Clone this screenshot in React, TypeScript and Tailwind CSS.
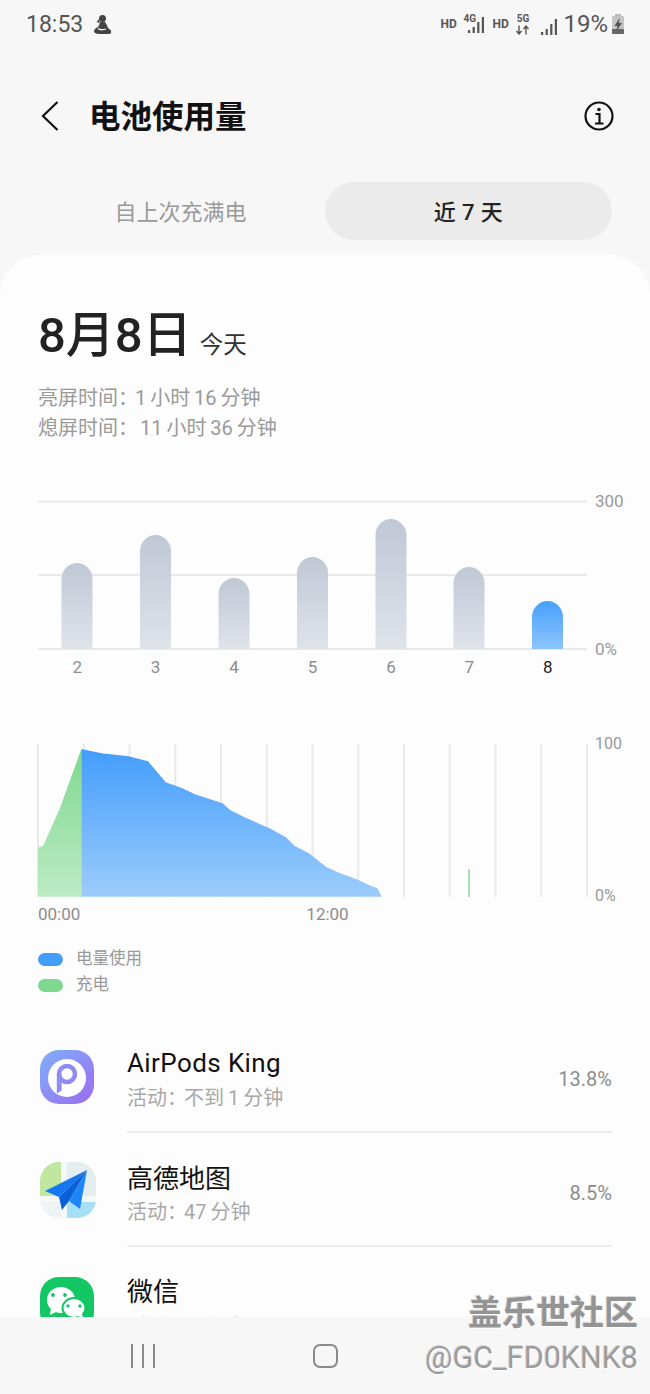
import React from 'react';

const CJK = '[font-family:Roboto,"Noto_Sans_CJK_SC",sans-serif]';

const bars = [
  { day: 2, x: 61.5, top: 563 },
  { day: 3, x: 140, top: 535 },
  { day: 4, x: 218.5, top: 578 },
  { day: 5, x: 297, top: 557 },
  { day: 6, x: 375.5, top: 519 },
  { day: 7, x: 453.5, top: 567 },
  { day: 8, x: 532, top: 601 },
];

const usagePoints =
  '43.3,896.7 43.3,749 63.6,753.3 90.5,756.3 110,761.3 127.8,782.3 144.4,788.3 156.9,794.3 184.6,803.3 192,810 206.6,817.3 231.5,828.3 248,837.3 256.4,845.7 270.9,853.3 288.3,867 302,873.3 318.6,879.3 331,885 339.3,888.3 343.8,896.7';

const Signal = () => (
  <svg width="17" height="16" viewBox="0 0 17 16" className="shrink-0">
    <rect x="0" y="13" width="2.2" height="3" fill="#555" />
    <rect x="4.6" y="10" width="2.2" height="6" fill="#555" />
    <rect x="9.2" y="5" width="2.2" height="11" fill="#555" />
    <rect x="13.8" y="0" width="2.2" height="16" fill="#555" />
  </svg>
);

const StatusIcons = () => (
  <div className="flex items-center text-[#555] [font-family:Roboto,sans-serif]">
    <span className="text-[12px] font-bold leading-none w-[16px]">HD</span>
    <div className="relative w-[22px] h-[20px] ml-[7px]">
      <span className="absolute left-0 top-0 text-[10px] font-bold leading-[9px]">4G</span>
      <div className="absolute left-[5px] top-[3px]">
        <Signal />
      </div>
    </div>
    <span className="text-[12px] font-bold leading-none w-[16px] ml-[7px]">HD</span>
    <div className="flex flex-col items-center w-[15px] ml-[7px]">
      <span className="text-[10px] font-bold leading-[9px]">5G</span>
      <svg width="15" height="10" viewBox="0 0 15 10" fill="none" stroke="#555" strokeWidth="1.4" className="mt-[2px]">
        <path d="M4 0.5v8M1.5 6L4 9l2.5-3M11 9.5v-8M8.5 4L11 1l2.5 3" />
      </svg>
    </div>
    <div className="ml-[11px] mt-[5px]">
      <Signal />
    </div>
    <span className="text-[24px] leading-none ml-[5px] font-normal">19%</span>
    <svg width="14" height="21" viewBox="0 0 14 21" className="ml-[3px]">
      <rect x="4" y="0" width="6" height="2" fill="#bbb" />
      <rect x="1" y="2" width="12" height="18" rx="1.5" fill="#c4c4c4" />
      <rect x="1" y="15" width="12" height="5" rx="1" fill="#666" />
      <path d="M8.5 4L3.5 12h3l-1 5 5.5-8h-3z" fill="#555" />
    </svg>
  </div>
);

const AirPodsIcon = () => (
  <svg width="54" height="54" viewBox="0 0 54 54">
    <defs>
      <linearGradient id="apk" x1="0" y1="0" x2="1" y2="1">
        <stop offset="0" stopColor="#7fb0fa" />
        <stop offset="1" stopColor="#9b6cf1" />
      </linearGradient>
    </defs>
    <rect width="54" height="54" rx="19" fill="url(#apk)" />
    <circle cx="27" cy="28" r="19" fill="#fff" />
    <circle cx="27" cy="24" r="8" fill="none" stroke="#8f8bf3" strokeWidth="4.5" />
    <path d="M16.8 24v19.5l4.8-3V24z" fill="#8f8bf3" />
  </svg>
);

const AmapIcon = () => (
  <svg width="56" height="56" viewBox="0 0 56 56" className="-mt-[2px]">
    <defs>
      <clipPath id="amapClip">
        <rect width="56" height="56" rx="19" />
      </clipPath>
    </defs>
    <g clipPath="url(#amapClip)">
      <rect width="56" height="56" fill="#f4f8f9" />
      <rect width="21" height="34" fill="#bfe79f" />
      <rect x="27" width="29" height="34" fill="#e4eeef" />
      <rect x="27" y="40" width="29" height="16" fill="#a6e0f6" />
      <rect y="40" width="21" height="16" fill="#eef4f6" />
    </g>
    <path d="M47 8L5 29l14 6z" fill="#1677f2" />
    <path d="M47 8L19 35l3 13 7-9z" fill="#0b5fd6" />
    <path d="M47 8L29 39l11 8z" fill="#1c86f7" />
  </svg>
);

const WechatIcon = () => (
  <svg width="54" height="54" viewBox="0 0 54 54" className="-mt-[1px]">
    <rect width="54" height="54" rx="19" fill="#12c764" />
    <ellipse cx="21" cy="23" rx="14" ry="13" fill="#fff" />
    <path d="M11 31l-1 7 8-4z" fill="#fff" />
    <ellipse cx="34" cy="31" rx="11.5" ry="10" fill="#fff" stroke="#12c764" strokeWidth="2" />
    <path d="M38 39l5 3-1-6z" fill="#fff" />
    <circle cx="13" cy="18" r="1.9" fill="#12c764" />
    <circle cx="25" cy="18" r="1.9" fill="#12c764" />
    <circle cx="28" cy="29" r="1.7" fill="#12c764" />
    <circle cx="40" cy="29" r="1.7" fill="#12c764" />
  </svg>
);

const apps = [
  { name: 'AirPods King', nameClass: 'leading-[32px] tracking-[0.4px]', subClass: 'mt-[5px]', sub: '不到 1 分钟', pct: '13.8%', icon: <AirPodsIcon /> },
  { name: '高德地图', nameClass: 'leading-[36px]', subClass: 'mt-[1px]', sub: '47 分钟', pct: '8.5%', icon: <AmapIcon /> },
  { name: '微信', nameClass: 'leading-[32px]', subClass: 'mt-[5px]', sub: '1 小时', pct: '', icon: <WechatIcon /> },
];

export default function App() {
  return (
    <div className={`relative w-[650px] h-[1394px] overflow-hidden bg-[#f7f7f7] flex flex-col ${CJK}`}>
      {/* status bar */}
      <div className="h-[48px] shrink-0 flex items-center justify-between pl-[26px] pr-[25px]">
        <div className="flex items-center text-[#555]">
          <span className="text-[23px] leading-none font-normal">18:53</span>
          <svg width="20" height="21" viewBox="0 0 20 21" className="ml-[10px]" fill="#444">
            <circle cx="9.5" cy="4.5" r="3.5" />
            <path d="M6.5 4.5L3.5 8l3 1z" />
            <path d="M7 8h5c1.5 2 2.5 4 3 6l2.5 2c1.500 1.500.5 4-1.500 4H6c-3 0-5-1-5-3s2-3 4-4c1-1 1.500-3 2-5z" />
            <path d="M5 14.500c2 1.500 5 1.500 8 .5" fill="none" stroke="#f7f7f7" strokeWidth="1.3" />
          </svg>
        </div>
        <StatusIcons />
      </div>

      {/* title row */}
      <div className="h-[68px] mt-[34px] shrink-0 flex items-center pl-[41px] pr-[36px]">
        <svg width="18" height="30" viewBox="0 0 18 30" fill="none" stroke="#111" strokeWidth="2.2">
          <path d="M16.500 1L2 15l14.500 14" />
        </svg>
        <h1 className="ml-[30px] mt-[3px] text-[31.5px] font-bold leading-none text-[#111]">电池使用量</h1>
        <svg width="30" height="30" viewBox="0 0 30 30" fill="none" className="ml-auto">
          <circle cx="15" cy="15" r="13.5" stroke="#111" strokeWidth="2.2" />
          <circle cx="15" cy="8.5" r="1.8" fill="#111" />
          <path d="M11.5 13H15.500V22M11 22.500H19.500" stroke="#111" strokeWidth="2.2" />
        </svg>
      </div>

      {/* tabs */}
      <div className="mt-[32px] shrink-0 flex pl-[38px] pr-[38px] h-[58px]">
        <div className="w-[287px] pt-[2px] flex items-center justify-center text-[22px] text-[#9a9a9a] -ml-[1px]">自上次充满电</div>
        <div className="w-[287px] pt-[2px] flex items-center justify-center text-[22px] font-medium text-[#222] bg-[#ebebeb] rounded-full ml-[1px] tracking-[0.4px]">近 7 天</div>
      </div>

      {/* card */}
      <div className="mt-[15px] flex-1 min-h-0 overflow-hidden bg-[#fdfdfd] rounded-t-[40px] pl-[38px]">
        <div className="flex items-end mt-[52px] h-[58px]">
          <span className="text-[49px] leading-[58px] font-medium text-[#222]">8月8日</span>
          <span className="ml-[8px] text-[23.5px] leading-[40px] text-[#333]">今天</span>
        </div>
        <div className="mt-[18px] text-[20px] leading-[30px] text-[#999] [word-spacing:-1px]">
          <p>亮屏时间<span className="tracking-[-7px]">：</span> 1 小时 16 分钟</p>
          <p>熄屏时间<span className="tracking-[-2px]">：</span> 11 小时 36 分钟</p>
        </div>

        {/* weekly chart */}
        <div className="mt-[57px] flex items-stretch h-[150px]">
          <svg width="549" height="150" viewBox="38 500 549 150" className="shrink-0">
            <defs>
              <linearGradient id="barGrey" x1="0" y1="0" x2="0" y2="1">
                <stop offset="0" stopColor="#c0c8d5" />
                <stop offset="1" stopColor="#dfe3ea" />
              </linearGradient>
              <linearGradient id="barBlue" x1="0" y1="0" x2="0" y2="1">
                <stop offset="0" stopColor="#47a0fb" />
                <stop offset="1" stopColor="#8cc4fb" />
              </linearGradient>
            </defs>
            <path d="M38 501.500H587M38 575H587M38 649H587" stroke="#e9e9e9" strokeWidth="2" />
            {bars.map((b) => (
              <path
                key={b.day}
                d={`M${b.x} 649V${b.top + 16}a15.5 16 0 0 1 31 0V649z`}
                fill={b.day === 8 ? 'url(#barBlue)' : 'url(#barGrey)'}
              />
            ))}
          </svg>
          <div className="ml-[8px] flex flex-col justify-between text-[17px] leading-[20px] text-[#999] -my-[9px]">
            <span>300</span>
            <span>0%</span>
          </div>
        </div>
        <div className="w-[549px] grid grid-cols-7 mt-[7px] text-[17px] leading-[20px] text-center text-[#8c8c8c]">
          {bars.map((b) => (
            <span key={b.day} className={b.day === 8 ? 'text-[#222]' : ''}>
              {b.day}
            </span>
          ))}
        </div>

        {/* daily chart */}
        <div className="mt-[66px] flex items-stretch h-[154px]">
          <svg width="551" height="154" viewBox="0 0 551 154" className="shrink-0 -ml-[1px]">
            <defs>
              <linearGradient id="usageFill" x1="0" y1="0" x2="0" y2="1">
                <stop offset="0" stopColor="#439dfb" />
                <stop offset="1" stopColor="#9cccfb" />
              </linearGradient>
              <linearGradient id="chargeFill" x1="0" y1="0" x2="0" y2="1">
                <stop offset="0" stopColor="#7fd88f" />
                <stop offset="1" stopColor="#bcebc4" />
              </linearGradient>
            </defs>
            <g transform="translate(0 -743)">
              {[...Array(13)].map((_, i) => (
                <path key={i} d={`M${1 + i * 45.75} 744V897`} stroke="#e9e9e9" strokeWidth="2" />
              ))}
              <g transform="translate(1 0)">
                <polygon points="0,896.7 0,847.7 5,846 22,808 43.3,749 43.3,896.7" fill="url(#chargeFill)" />
                <polygon points={usagePoints} fill="url(#usageFill)" />
                <path d="M431 869V897" stroke="#a9e2b4" strokeWidth="2" />
              </g>
            </g>
          </svg>
          <div className="ml-[7px] flex flex-col justify-between text-[16px] leading-[20px] text-[#999] -my-[9px]">
            <span>100</span>
            <span>0%</span>
          </div>
        </div>
        <div className="flex mt-[7px] text-[17px] leading-[20px] text-[#8c8c8c] w-[549px]">
          <span>00:00</span>
          <span className="ml-[226px]">12:00</span>
        </div>

        {/* legend */}
        <div className="mt-[25px] flex flex-col gap-[6px] text-[16.5px] leading-[20px] text-[#999]">
          <div className="flex items-center">
            <span className="w-[25px] h-[13px] rounded-full bg-[#439dfb]" />
            <span className="ml-[13px]">电量使用</span>
          </div>
          <div className="flex items-center">
            <span className="w-[25px] h-[13px] rounded-full bg-[#7fd88f]" />
            <span className="ml-[13px]">充电</span>
          </div>
        </div>

        {/* app list */}
        <div className="mt-[27px]">
          {apps.map((app, i) => (
            <div key={app.name} className="flex items-start h-[114px]">
              <div className="w-[56px] ml-[2px] mt-[28px] shrink-0">{app.icon}</div>
              <div className={`ml-[31px] w-[485px] h-[111px] pt-[5px] flex items-center ${i < 2 ? 'border-b-2 border-[#ececec]' : ''}`}>
                <div className="flex-1">
                  <div className={`text-[26px] text-[#111] ${app.nameClass}`}>{app.name}</div>
                  <div className={`${app.subClass} text-[20px] leading-[28px] text-[#a8a8a8] [word-spacing:-1px]`}>
                    活动<span className="tracking-[-3px]">：</span>{app.sub}
                  </div>
                </div>
                <div className="text-[20px] text-[#8c8c8c]">{app.pct}</div>
              </div>
            </div>
          ))}
        </div>
      </div>

      {/* nav bar */}
      <div className="h-[77px] shrink-0 bg-[#f7f7f7] flex items-start pt-[27px] pl-[131px]">
        <div className="w-[24px] h-[24px] flex justify-between">
          <span className="w-[2px] h-full bg-[#8a8a8a]" />
          <span className="w-[2px] h-full bg-[#8a8a8a]" />
          <span className="w-[2px] h-full bg-[#8a8a8a]" />
        </div>
        <div className="ml-[158px] w-[25px] h-[24px] rounded-[7px] border-2 border-[#8a8a8a]" />
      </div>

      {/* watermark */}
      <div className="absolute right-[12px] top-[1291px] text-right text-[#949494] [text-shadow:1px_1px_0_#ffffff,-1px_-1px_0_#d8d8d8]">
        <div className="text-[34px] leading-[44px] font-bold">盖乐世社区</div>
        <div className="mt-[5px] text-[30.5px] leading-[36px] text-[#9c9c9c] [font-family:Roboto,sans-serif]">@GC_FD0KNK8</div>
      </div>
    </div>
  );
}
